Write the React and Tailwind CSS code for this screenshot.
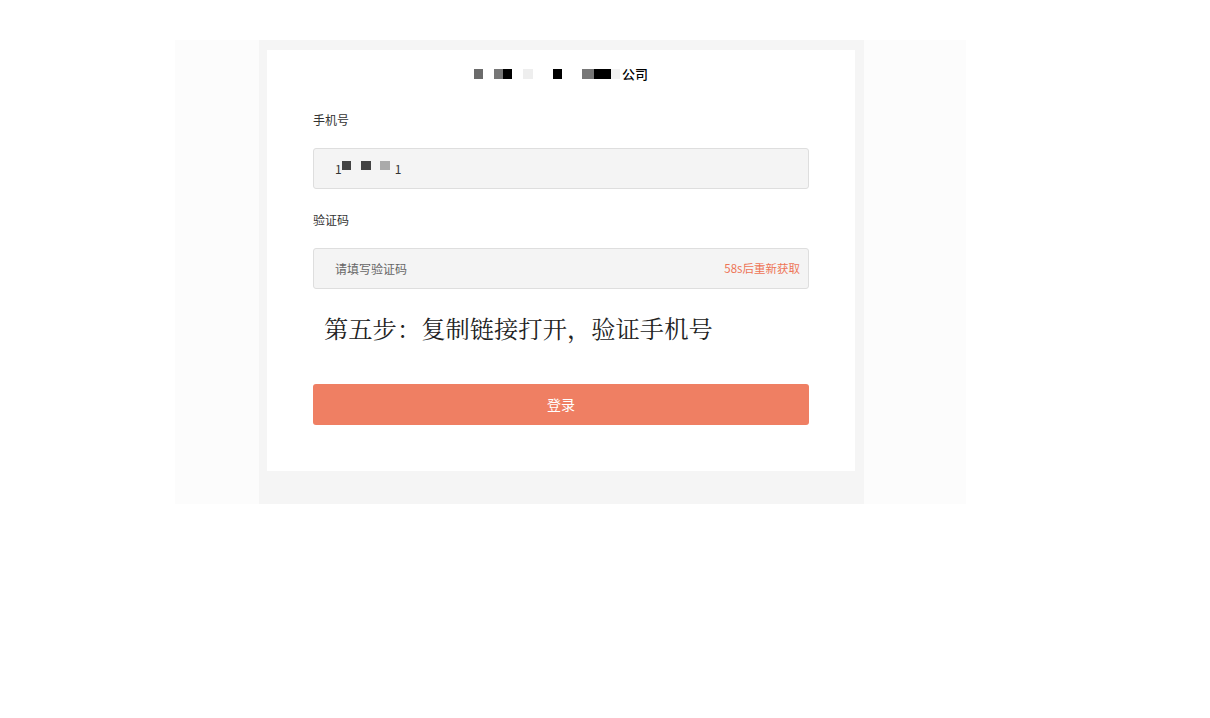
export default function App() {
  const font = { fontFamily: '"Noto Sans CJK SC", "Noto Sans", sans-serif' };
  return (
    <div className="w-[1210px] h-[718px] bg-white pt-[40px]" style={font}>
      <div className="ml-[175px] w-[791px] bg-[#fcfcfc]">
        <div className="ml-[84px] w-[605px] bg-[#f5f5f5] pt-[10px] pl-[8px] pb-[33px]">
          <div className="w-[588px] h-[421px] bg-white px-[46px] pt-[14px]">
            <div className="flex items-center justify-center h-[20px] text-[13px] font-medium text-black leading-[20px]">
              <span className="inline-block w-[9px] h-[10px] bg-[#6b6b6b]" />
              <span className="inline-block w-[9px] h-[10px] bg-[#777] ml-[11px]" />
              <span className="inline-block w-[9px] h-[10px] bg-black" />
              <span className="inline-block w-[10px] h-[10px] bg-[#eeeeee] ml-[11px]" />
              <span className="inline-block w-[9px] h-[10px] bg-black ml-[20px]" />
              <span className="inline-block w-[12px] h-[10px] bg-[#777] ml-[20px]" />
              <span className="inline-block w-[17px] h-[10px] bg-black" />
              <span className="inline-block w-[9px] h-[10px] bg-[#f2f2f2]" />
              <span className="ml-[2px]">公司</span>
            </div>
            <div className="mt-[27px] text-[12px] leading-[17px] text-[#333]">手机号</div>
            <div className="mt-[20px] h-[41px] w-[496px] rounded-[3px] border border-[#dedede] bg-[#f4f4f4] flex items-center pl-[21px] text-[12px] text-[#333]">
              <span>1</span>
              <span className="inline-block w-[9px] h-[9px] bg-[#444] -mt-[6px]" />
              <span className="inline-block w-[10px] h-[9px] bg-[#444] -mt-[6px] ml-[10px]" />
              <span className="inline-block w-[10px] h-[9px] bg-[#aaa] -mt-[6px] ml-[9px]" />
              <span className="ml-[5px]">1</span>
            </div>
            <div className="mt-[22px] text-[12px] leading-[17px] text-[#333]">验证码</div>
            <div className="mt-[20px] h-[41px] w-[496px] rounded-[3px] border border-[#dedede] bg-[#f4f4f4] flex items-center justify-between pl-[21px] pr-[8px] text-[12px]">
              <span className="text-[#666]">请填写验证码</span>
              <span className="text-[#ee7456] text-[11.5px]">58s后重新获取</span>
            </div>
            <div className="mt-[22px] pl-[11px] text-[24.3px] leading-[34px] text-[#222]" style={{ fontFamily: '"Noto Serif CJK SC", "Liberation Serif", "Noto Sans CJK SC", serif' }}>
              第五步：复制链接打开，验证手机号
            </div>
            <button className="mt-[39px] h-[41px] w-[496px] rounded-[3px] bg-[#ef7f63] text-white text-[14px] flex items-center justify-center">
              登录
            </button>
          </div>
        </div>
      </div>
    </div>
  );
}
